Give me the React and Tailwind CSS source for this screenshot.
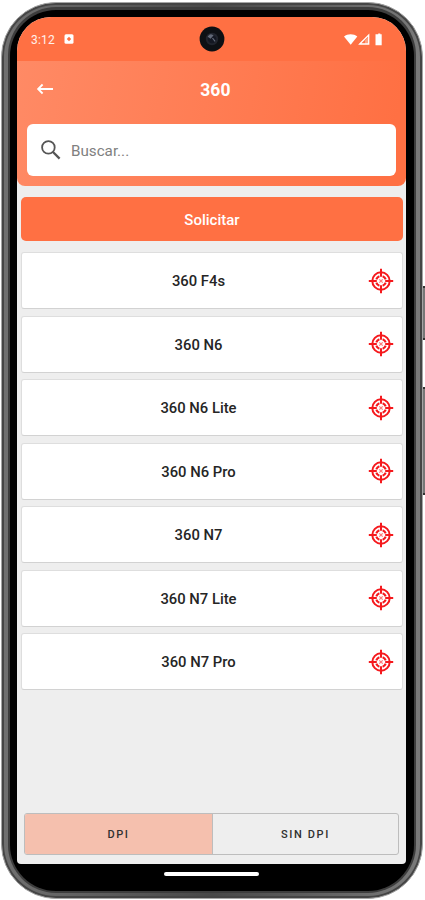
const MODELOS = [
  "360 F4s",
  "360 N6",
  "360 N6 Lite",
  "360 N6 Pro",
  "360 N7",
  "360 N7 Lite",
  "360 N7 Pro",
];

const IconoMira = () => (
  <svg width="26" height="26" viewBox="0 0 26 26" fill="none" stroke="#f5191d">
    <circle cx="13" cy="13" r="8.7" strokeWidth="2" />
    {/* anillo interior partido en cuatro arcos */}
    <path
      d="M14.6 8.3A5 5 0 0 1 17.7 11.4M17.7 14.6A5 5 0 0 1 14.6 17.7M11.4 17.7A5 5 0 0 1 8.3 14.6M8.3 11.4A5 5 0 0 1 11.4 8.3"
      strokeWidth="2.1"
    />
    <path d="M13 .8v8M13 17.2v8M.8 13h8M17.2 13h8" strokeWidth="2" />
    <path d="M11.3 11.3l3.4 3.4M14.7 11.3l-3.4 3.4" stroke="#f77" strokeWidth="1.2" />
  </svg>
);

const BarraEstado = () => (
  <div className="relative h-11 bg-[#ff7043] flex items-center pl-[14px] pr-[23px] text-white">
    <span className="text-[12px] leading-none tracking-[0.2px] text-white/90 mt-px">3:12</span>
    <svg className="ml-[9px]" width="10" height="10" viewBox="0 0 10 10">
      <rect x="0.5" y="0.3" width="9" height="9.4" rx="1.5" fill="white" />
      <path d="M5 2.7L7.2 5 5 7.3 2.8 5z" fill="#ff7043" />
    </svg>
    <svg className="ml-auto" width="39" height="13" viewBox="0 0 39 13" fill="white">
      <path d="M0 3.6C3.6.5 9.7.5 13.3 3.6L6.7 11.8z" />
      <path d="M15.7 11L24.7 2v9z" fill="none" stroke="white" strokeWidth="1.3" />
      <path d="M21 7.5l3.7-4V11H21z" fillOpacity=".35" />
      <path d="M32.8 1.2h1.4V.4h2.1v.8h1.4v11h-6.2v-11z" />
    </svg>

    {/* Cámara frontal */}
    <svg className="absolute left-[182px] top-[9px]" width="26" height="26" viewBox="0 0 26 26">
      <circle cx="13" cy="13" r="12.4" fill="#0d1014" />
      <circle cx="13" cy="13" r="6.2" fill="#20242d" />
      <circle cx="13" cy="13" r="4.2" fill="#141823" />
      <path d="M9.5 10.5c1-1.5 3-1.7 4.2-1l-2.2 2.5zM13.5 12l2.6 3.4" stroke="#636a79" fill="#636a79" strokeWidth="1.2" />
    </svg>
  </div>
);

const Cabecera = () => (
  <div className="h-[125px] rounded-b-[8px] bg-linear-[100deg] from-[#ff8a65] to-[#ff7043] to-95% px-[10px]">
    <div className="grid grid-cols-[36px_1fr_36px] items-center h-[63px] pb-[6px]">
      <svg className="ml-[9px] -mt-px" width="18" height="12" viewBox="0 0 18 12" fill="none" stroke="white" strokeWidth="1.8">
        <path d="M17 6H2.5M6.6 1.5L2.1 6l4.5 4.5" />
      </svg>
      <div className="text-center text-[17.5px] font-bold text-white pl-[8px] pt-[2px] tracking-[0.2px]">360</div>
    </div>
    <div className="h-[52px] w-[369px] bg-white rounded-[6px] flex items-center pl-[13px]">
      <svg width="22" height="22" viewBox="0 0 22 22" fill="none" stroke="#555" strokeWidth="1.8">
        <circle cx="8.4" cy="8.4" r="6.3" />
        <path d="M13 13l6.6 6.6" strokeWidth="2.3" />
      </svg>
      <span className="ml-[9px] pt-[3px] text-[15.2px] text-[#808080]">Buscar...</span>
    </div>
  </div>
);

export default function App() {
  return (
    <div className="w-[425px] h-[900px] overflow-hidden bg-white pl-px pt-[2px] flex font-['Roboto',sans-serif]">
      {/* Marco del teléfono */}
      <div className="w-[422px] h-[897px] shrink-0 rounded-[55px] border border-[#a5a5a5] bg-[#454545] p-[2px]">
        <div className="h-full rounded-[52px] bg-linear-to-r from-[#707070] via-[#484848] to-[#7a7a7a] px-[4px] pt-[2px] pb-[3px]">
          <div className="h-full rounded-[48px] bg-[#3d3d3d] px-[2px] pt-[3px] pb-[2px]">
            <div className="h-full rounded-[46px] bg-black pl-[7px] pr-[8px] pt-[7px]">
              <div className="w-[389px] h-[847px] rounded-t-[34px] rounded-b-[4px] overflow-hidden bg-[#eeeeee] flex flex-col">
                <BarraEstado />
                <Cabecera />

                <div className="pl-[4px] pr-[3px] pt-[11px]">
                  <div className="h-[44px] pt-[2px] rounded-[5px] bg-[#ff7043] text-white text-[15px] font-medium flex items-center justify-center">
                    Solicitar
                  </div>
                  <div className="mt-[11px] flex flex-col gap-[6.5px]">
                    {MODELOS.map((m) => (
                      <div
                        key={m}
                        className="h-[57px] bg-white border border-[#dedede] border-b-[#d2d2d2] rounded-[3px] flex items-center pr-[8px]"
                      >
                        <span className="flex-1 text-center text-[14.8px] font-medium text-[#252525] pl-[7px] pt-[2px]">{m}</span>
                        <IconoMira />
                      </div>
                    ))}
                  </div>
                </div>

                {/* Selector DPI */}
                <div className="mt-auto mb-[9px] ml-[7px] w-[375px] h-[42px] border border-[#bdbdbd] rounded-[3px] flex text-[11px] font-medium tracking-[1.6px] text-[#303030] overflow-hidden">
                  <div className="w-[188px] pt-[2px] bg-[#f5c0ae] border-r border-[#bdbdbd] flex items-center justify-center">DPI</div>
                  <div className="flex-1 pt-[2px] flex items-center justify-center">SIN DPI</div>
                </div>
              </div>

              <div className="mx-auto mt-[8px] w-[95px] h-[4px] rounded-full bg-white" />
            </div>
          </div>
        </div>
      </div>

      {/* Botones laterales */}
      <div className="w-[2px] shrink-0 pt-[284px]">
        <div className="h-[54px] bg-[#777] border-y-2 border-[#333]" />
        <div className="mt-[47px] h-[108px] bg-[#777] border-y-2 border-[#333]" />
      </div>
    </div>
  );
}
